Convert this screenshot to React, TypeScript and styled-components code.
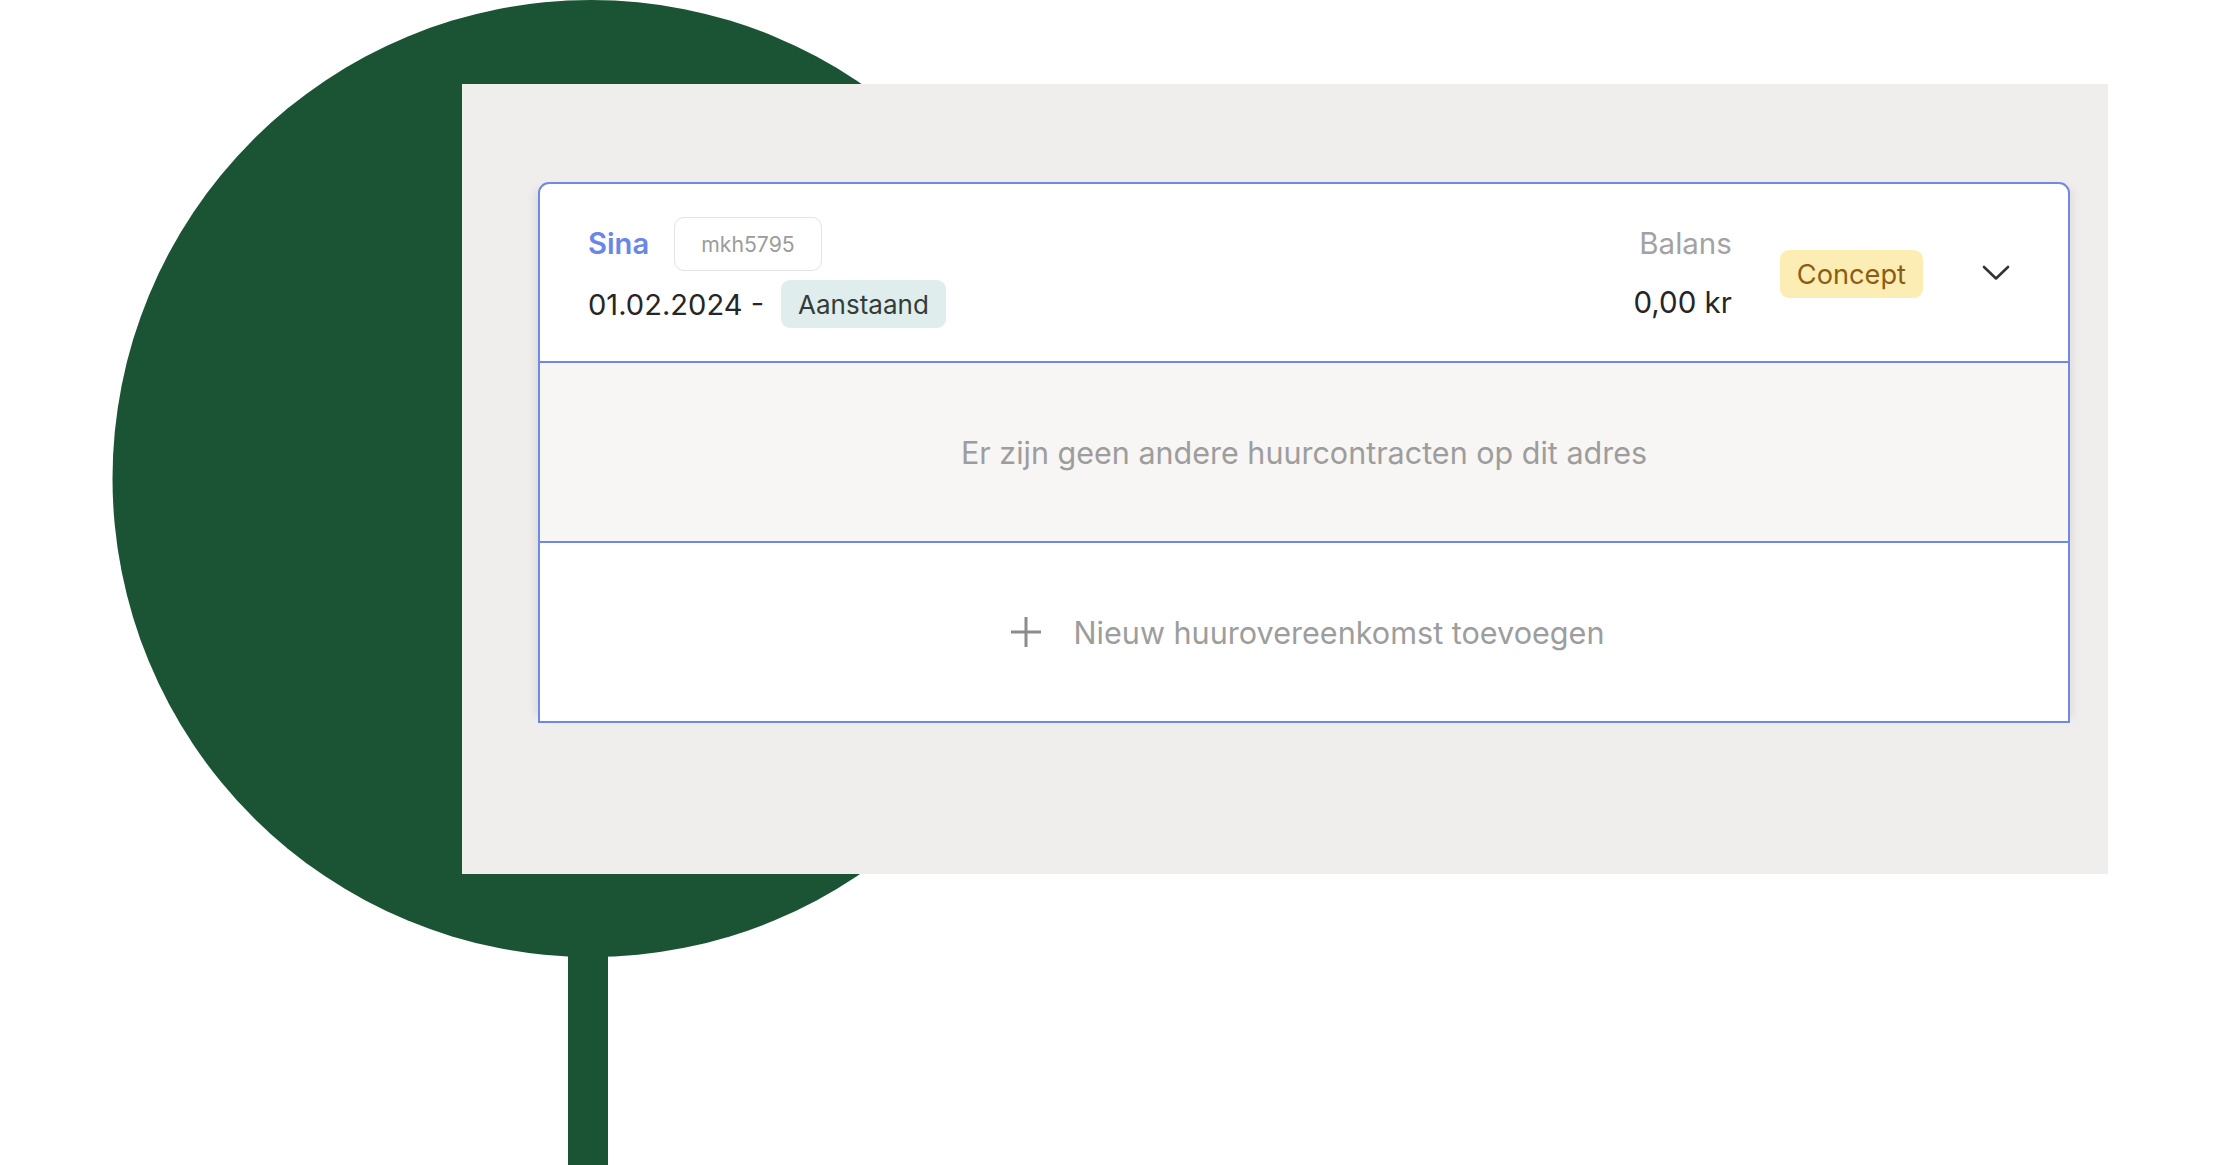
import React from "react";
import styled, { createGlobalStyle } from "styled-components";

const GlobalStyle = createGlobalStyle`
  html, body {
    margin: 0;
    padding: 0;
    background: #ffffff;
  }
  body {
    font-family: Inter, "Noto Sans", Arial, sans-serif;
    -webkit-font-smoothing: antialiased;
  }
  * { box-sizing: border-box; }
`;

const Stage = styled.div`
  position: relative;
  width: 2220px;
  height: 1165px;
  overflow: hidden;
  padding: 84px 0 0 462px;
`;

const Decoration = styled.svg`
  position: absolute;
  left: 0;
  top: 0;
  width: 2220px;
  height: 1165px;
  z-index: 0;
`;

const Panel = styled.section`
  position: relative;
  z-index: 1;
  width: 1646px;
  height: 790px;
  background: #efeeec;
  padding: 98px 38px 0 76px;
`;

const Card = styled.div`
  width: 1532px;
  background: #ffffff;
  border: 2px solid #7089e3;
  border-radius: 11px 11px 0 0;
  box-shadow: -10px 0 10px -7px rgba(0, 0, 0, 0.08),
    8px 0 8px -5px rgba(0, 0, 0, 0.07);
  display: flex;
  flex-direction: column;
`;

const HeaderRow = styled.div`
  height: 177px;
  display: flex;
  align-items: center;
  padding: 0 58px 0 48px;
`;

const LeftBlock = styled.div`
  display: flex;
  flex-direction: column;
  gap: 9px;
  flex: 1;
`;

const Line = styled.div<{ $gap: number }>`
  display: flex;
  align-items: center;
  gap: ${(p) => p.$gap}px;
`;

const Name = styled.span`
  font-size: 29.2px;
  font-weight: 600;
  color: #6a86e6;
  line-height: 1;
`;

const CodeTag = styled.span`
  height: 54px;
  padding: 0 26px;
  display: inline-flex;
  align-items: center;
  border: 1.5px solid #e3e3e3;
  border-radius: 10px;
  font-size: 21.2px;
  color: #9c9c9c;
`;

const DateText = styled.span`
  font-size: 29.1px;
  color: #262626;
`;

const Pill = styled.span<{ $bg: string; $fg: string; $size: number }>`
  height: 48px;
  padding: 0 17px;
  display: inline-flex;
  align-items: center;
  border-radius: 9px;
  background: ${(p) => p.$bg};
  color: ${(p) => p.$fg};
  font-size: ${(p) => p.$size}px;
`;

const StatusPill = styled(Pill)`
  margin-top: 3px;
`;

const Balance = styled.div`
  display: flex;
  flex-direction: column;
  align-items: flex-end;
  gap: 19px;
  margin-right: 48px;
`;

const BalanceLabel = styled.span`
  font-size: 29.5px;
  line-height: 40px;
  color: #a2a2a2;
`;

const BalanceValue = styled.span`
  font-size: 29.5px;
  line-height: 40px;
  color: #262626;
`;

const ChevronButton = styled.span`
  display: inline-flex;
  margin-left: 59px;
  width: 28px;
  height: 16px;
`;

const EmptyRow = styled.div`
  height: 180px;
  border-top: 2px solid #7089e3;
  background: #f7f6f4;
  display: flex;
  align-items: center;
  justify-content: center;
  font-size: 30.5px;
  color: #9d9d9d;
`;

const AddRow = styled.div`
  height: 180px;
  border-top: 2px solid #7089e3;
  background: #ffffff;
  display: flex;
  align-items: center;
  justify-content: center;
  gap: 32px;
  padding-left: 6px;
  font-size: 30.6px;
  color: #9d9d9d;
`;

const PlusIcon = () => (
  <svg width="32" height="32" viewBox="0 0 32 32">
    <path d="M16 1 V31 M1 16 H31" stroke="#8c8c8c" strokeWidth="3" fill="none" />
  </svg>
);

const Chevron = () => (
  <svg width="28" height="16" viewBox="0 0 28 16">
    <path
      d="M2 2 L14 13.5 L26 2"
      stroke="#333333"
      strokeWidth="2.6"
      fill="none"
      strokeLinecap="round"
      strokeLinejoin="round"
    />
  </svg>
);

export default function App() {
  return (
    <>
      <GlobalStyle />
      <Stage>
        <Decoration viewBox="0 0 2220 1165">
          <circle cx="591" cy="478.5" r="478.5" fill="#1b5335" />
          <rect x="568" y="900" width="40" height="265" fill="#1b5335" />
        </Decoration>
        <Panel>
          <Card>
            <HeaderRow>
              <LeftBlock>
                <Line $gap={25}>
                  <Name>Sina</Name>
                  <CodeTag>mkh5795</CodeTag>
                </Line>
                <Line $gap={17}>
                  <DateText>01.02.2024 -</DateText>
                  <Pill $bg="#dfeeec" $fg="#363b3a" $size={26}>
                    Aanstaand
                  </Pill>
                </Line>
              </LeftBlock>
              <Balance>
                <BalanceLabel>Balans</BalanceLabel>
                <BalanceValue>0,00 kr</BalanceValue>
              </Balance>
              <StatusPill $bg="#fcedb5" $fg="#8a5e12" $size={27.2}>
                Concept
              </StatusPill>
              <ChevronButton>
                <Chevron />
              </ChevronButton>
            </HeaderRow>
            <EmptyRow>Er zijn geen andere huurcontracten op dit adres</EmptyRow>
            <AddRow>
              <PlusIcon />
              <span>Nieuw huurovereenkomst toevoegen</span>
            </AddRow>
          </Card>
        </Panel>
      </Stage>
    </>
  );
}
